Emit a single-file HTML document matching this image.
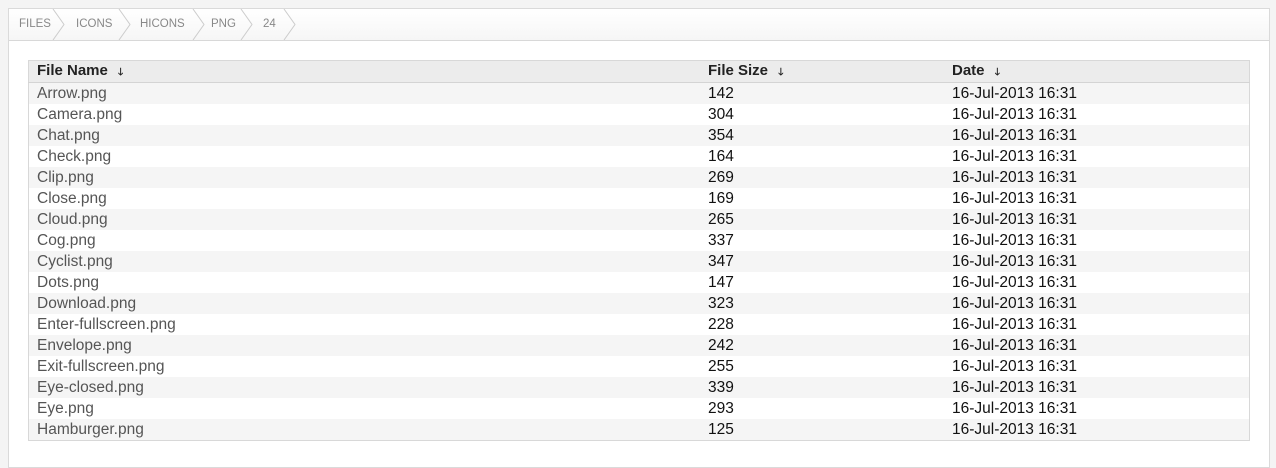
<!DOCTYPE html>
<html><head><style>
body{margin:0;width:1276px;height:441px;overflow:hidden;background:#f4f4f4;font-family:"Liberation Sans",sans-serif;}
.panel{position:absolute;left:8px;top:8px;width:1262px;height:460px;background:#fff;border:1px solid #dadada;box-sizing:border-box;}
.bc{height:31px;background:linear-gradient(#fff,#f6f6f6);border-bottom:1px solid #d8d8d8;position:relative;font-size:11.5px;color:#888;}
.bc span{position:absolute;top:9px;}
.bc svg{position:absolute;top:0;}
table{position:absolute;left:19px;top:51px;width:1222px;border-collapse:collapse;border:1px solid #d8d8d8;font-size:15.5px;}
th{background:#ececec;text-align:left;font-weight:bold;color:#222;height:19px;line-height:19px;padding:0 0 0 8px;border-bottom:1px solid #d4d4d4;font-size:15px;}
td{height:21px;line-height:20px;padding:0 0 0 8px;color:#111;}
td:first-child{color:#555;}
tr:nth-child(even) td{background:#f5f5f5;}
.ar{font-size:10px;margin-left:6px;font-weight:bold;}
</style></head><body>
<div class="panel">
<div class="bc">
<span style="left:10px">FILES</span>
<svg style="left:43px" width="14" height="31"><path d="M1 0 L12 15.5 L1 31" fill="none" stroke="#ccc"/></svg>
<span style="left:67px">ICONS</span>
<svg style="left:109px" width="14" height="31"><path d="M1 0 L12 15.5 L1 31" fill="none" stroke="#ccc"/></svg>
<span style="left:131px">HICONS</span>
<svg style="left:183px" width="14" height="31"><path d="M1 0 L12 15.5 L1 31" fill="none" stroke="#ccc"/></svg>
<span style="left:202px">PNG</span>
<svg style="left:231px" width="14" height="31"><path d="M1 0 L12 15.5 L1 31" fill="none" stroke="#ccc"/></svg>
<span style="left:254px">24</span>
<svg style="left:274px" width="14" height="31"><path d="M1 0 L12 15.5 L1 31" fill="none" stroke="#ccc"/></svg>
</div>
<table>
<tr><th style="width:663px">File Name <span class="ar">&#129107;</span></th><th style="width:236px">File Size <span class="ar">&#129107;</span></th><th>Date <span class="ar">&#129107;</span></th></tr>
<tr><td>Arrow.png</td><td>142</td><td>16-Jul-2013 16:31</td></tr>
<tr><td>Camera.png</td><td>304</td><td>16-Jul-2013 16:31</td></tr>
<tr><td>Chat.png</td><td>354</td><td>16-Jul-2013 16:31</td></tr>
<tr><td>Check.png</td><td>164</td><td>16-Jul-2013 16:31</td></tr>
<tr><td>Clip.png</td><td>269</td><td>16-Jul-2013 16:31</td></tr>
<tr><td>Close.png</td><td>169</td><td>16-Jul-2013 16:31</td></tr>
<tr><td>Cloud.png</td><td>265</td><td>16-Jul-2013 16:31</td></tr>
<tr><td>Cog.png</td><td>337</td><td>16-Jul-2013 16:31</td></tr>
<tr><td>Cyclist.png</td><td>347</td><td>16-Jul-2013 16:31</td></tr>
<tr><td>Dots.png</td><td>147</td><td>16-Jul-2013 16:31</td></tr>
<tr><td>Download.png</td><td>323</td><td>16-Jul-2013 16:31</td></tr>
<tr><td>Enter-fullscreen.png</td><td>228</td><td>16-Jul-2013 16:31</td></tr>
<tr><td>Envelope.png</td><td>242</td><td>16-Jul-2013 16:31</td></tr>
<tr><td>Exit-fullscreen.png</td><td>255</td><td>16-Jul-2013 16:31</td></tr>
<tr><td>Eye-closed.png</td><td>339</td><td>16-Jul-2013 16:31</td></tr>
<tr><td>Eye.png</td><td>293</td><td>16-Jul-2013 16:31</td></tr>
<tr><td>Hamburger.png</td><td>125</td><td>16-Jul-2013 16:31</td></tr>
</table>
</div>
</body></html>
